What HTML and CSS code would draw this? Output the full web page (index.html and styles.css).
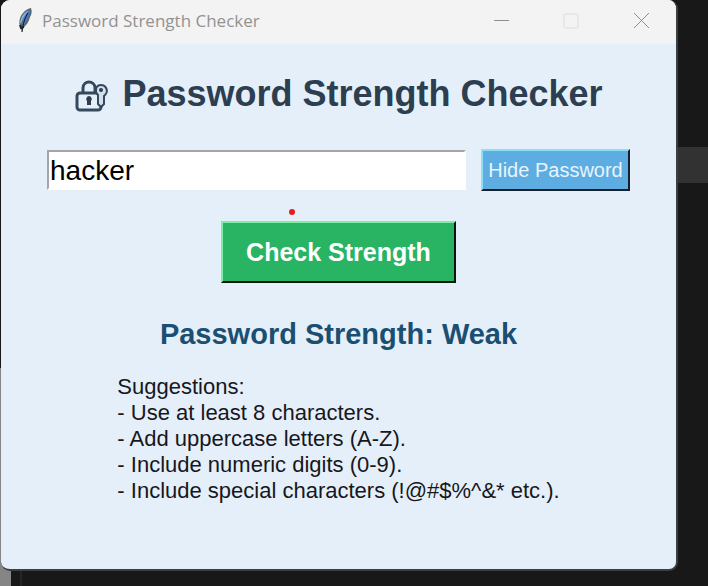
FILE: index.html
```html
<!DOCTYPE html>
<html lang="en">
<head>
<meta charset="utf-8">
<meta name="viewport" content="width=device-width, initial-scale=1">
<title>Password Strength Checker</title>
<link rel="stylesheet" href="styles.css">
</head>
<body>
<div class="window">
  <header class="titlebar">
    <svg class="feather" viewBox="0 0 16 26" aria-hidden="true">
      <path d="M14 1C9 2 5 6 3 11c-1 4-1 7 1 10l1 4 1-4c4-3 6-7 7-11 2-3 2-6 1-9z" fill="#5a6672"/>
      <path d="M13 3C10 5 7 9 6 13l-1 6c3-2 5-5 6-9 2-3 2-5 2-7z" fill="#3f7fd0"/>
      <path d="M12 3C8 5 5 8 4 12l-1 3 1 2c1-5 4-9 8-14z" fill="#8fb2dc"/>
      <path d="M11 6C8 11 6 16 5 25" fill="none" stroke="#111" stroke-width="1"/>
      <path d="M3 18l1 3 3-1" fill="none" stroke="#222" stroke-width="2"/>
    </svg>
    <span class="caption">Password Strength Checker</span>
    <div class="controls">
      <button type="button" aria-label="Minimize"><svg viewBox="0 0 16 16"><path d="M1 7.5h15"/></svg></button>
      <button type="button" aria-label="Maximize" disabled><svg viewBox="0 0 16 16"><rect x="1" y="1" width="14" height="14" rx="1"/></svg></button>
      <button type="button" aria-label="Close"><svg viewBox="0 0 16 16"><path d="M1 0l15 15M16 0L1 15"/></svg></button>
    </div>
  </header>
  <main class="content">
    <h1>
      <svg class="lock" viewBox="0 0 36 34" aria-hidden="true">
        <path d="M9 14V9c0-8 12-8 12 0v5"/>
        <rect x="3" y="14" width="24" height="17" rx="3"/>
        <path class="key" d="M24 16c-4-4-2-10 3-10s8 6 4 10l-1 1v8l-3 3-3-3z"/>
        <circle class="dot" cx="27" cy="11" r="2"/>
        <path class="dot" d="M15 17a3 3 0 0 1 2 5v4h-4v-4a3 3 0 0 1 2-5z"/>
      </svg>
      <span>Password Strength Checker</span>
    </h1>
    <form class="entry-row">
      <input type="text" class="entry" value="hacker" aria-label="Password">
      <button type="button" class="raised toggle">Hide Password</button>
    </form>
    <div class="action">
      <span class="pointer"></span>
      <button type="button" class="raised check">Check Strength</button>
    </div>
    <h2>Password Strength: Weak</h2>
    <div class="suggestions">
      <p>Suggestions:</p>
      <p>- Use at least 8 characters.</p>
      <p>- Add uppercase letters (A-Z).</p>
      <p>- Include numeric digits (0-9).</p>
      <p>- Include special characters (!@#$%^&amp;* etc.).</p>
    </div>
  </main>
</div>
</body>
</html>
```
FILE: styles.css
```css
* {
  box-sizing: border-box;
}

body {
  margin: 0;
  min-height: 100vh;
  padding: 0 30px 15px 1px;
  display: flex;
  font-family: "Liberation Sans", Arial, sans-serif;
  background:
    linear-gradient(#323232, #323232) right 147px / 32px 36px no-repeat,
    linear-gradient(#252525, #252525) 20px bottom / 2px 17px no-repeat,
    linear-gradient(transparent 368px, #858585 368px) left top / 11px 100% no-repeat,
    #181818;
}

.window {
  flex: 1;
  display: flex;
  flex-direction: column;
  overflow: hidden;
  border: solid #3c3f42;
  border-width: 0 2px 2px 0;
  border-radius: 9px;
  background: #e5effa;
}

.titlebar {
  display: flex;
  align-items: center;
  height: 44px;
  padding-left: 16px;
  background: #f3f3f3;
}

.feather {
  width: 16px;
  height: 26px;
  margin-bottom: 4px;
}

.caption {
  margin: 0 auto 4px 9px;
  font-family: "Open Sans", "Noto Sans", sans-serif;
  font-size: 17px;
  color: #929292;
}

.controls {
  display: flex;
  align-self: stretch;
  padding-bottom: 3px;
}

.controls button {
  width: 70px;
  padding: 0;
  border: 0;
  background: none;
  display: grid;
  place-items: center;
}

.controls svg {
  width: 16px;
  height: 16px;
  fill: none;
  stroke: #8f8f8f;
}

.controls button:disabled svg {
  stroke: #dddddd;
}

.content {
  padding: 29px 46px 65px;
  display: flex;
  flex-direction: column;
  align-items: center;
}

h1,
h2,
p {
  margin: 0;
}

h1 {
  display: flex;
  align-items: center;
  gap: 12px;
  font-size: 36px;
  line-height: 42px;
  color: #2c3e50;
}

.lock {
  width: 36px;
  height: 34px;
  margin-top: 3px;
  fill: none;
  stroke: #34495e;
  stroke-width: 3;
}

.lock .key {
  fill: #d3dfeb;
  stroke-width: 2;
}

.lock .dot {
  fill: #2c3e50;
  stroke: none;
}

.entry-row {
  display: flex;
  align-items: center;
  align-self: stretch;
  gap: 15px;
  margin-top: 34px;
}

.entry {
  flex: 1;
  min-width: 0;
  height: 40px;
  padding: 2px 1px 0;
  border: 2px solid;
  border-color: #a5a5a5 #ffffff #ffffff #a5a5a5;
  border-radius: 0;
  outline: 0;
  background: #ffffff;
  font: 28px "Liberation Sans", Arial, sans-serif;
  color: #000000;
}

.raised {
  border: 2px solid;
  border-radius: 0;
  font-family: inherit;
  white-space: nowrap;
}

.toggle {
  width: 149px;
  height: 42px;
  padding: 0;
  border-color: #8be0f5 #15202a #15202a #8be0f5;
  background: #5dade2;
  font-size: 20px;
  color: #e9f4fc;
}

.action {
  position: relative;
  margin-top: 30px;
}

.check {
  height: 62px;
  padding: 0 23px;
  border-color: #7cefa5 #08180e #08180e #7cefa5;
  background: #29b463;
  font-size: 25px;
  font-weight: bold;
  color: #ffffff;
}

.pointer {
  position: absolute;
  top: -12px;
  left: 68px;
  width: 6px;
  height: 6px;
  border-radius: 50%;
  background: #e81c1c;
}

h2 {
  margin-top: 34px;
  font-size: 29px;
  line-height: 34px;
  color: #1b4f72;
}

.suggestions {
  margin-top: 23px;
  font-size: 22px;
  line-height: 26px;
  color: #17171c;
}
```
